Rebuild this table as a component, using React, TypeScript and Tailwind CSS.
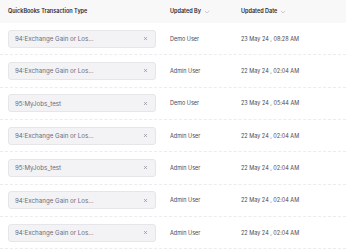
import React from "react";

const rows = [
  { t: "94:Exchange Gain or Los...", u: "Demo User", d: "23 May 24 , 08:28 AM" },
  { t: "94:Exchange Gain or Los...", u: "Admin User", d: "22 May 24 , 02:04 AM" },
  { t: "95:MyJobs_test", u: "Demo User", d: "23 May 24 , 05:44 AM" },
  { t: "94:Exchange Gain or Los...", u: "Admin User", d: "22 May 24 , 02:04 AM" },
  { t: "95:MyJobs_test", u: "Admin User", d: "22 May 24 , 02:04 AM" },
  { t: "94:Exchange Gain or Los...", u: "Admin User", d: "22 May 24 , 02:04 AM" },
  { t: "94:Exchange Gain or Los...", u: "Admin User", d: "22 May 24 , 02:04 AM" },
];

const Chevron = () => (
  <svg width="6" height="4" viewBox="0 0 6 4" className="ml-[3px]">
    <path d="M0.8 0.9 L3 3 L5.2 0.9" fill="none" stroke="#b8b8c0" strokeWidth="0.7" />
  </svg>
);

const X = () => (
  <svg width="5" height="5" viewBox="0 0 5 5">
    <path d="M1 1 L4 4 M4 1 L1 4" fill="none" stroke="#8e8e9a" strokeWidth="0.7" />
  </svg>
);

export default function App() {
  return (
    <div className="w-[346px] h-[250px] bg-white overflow-hidden" style={{ fontFamily: "Inter, 'Noto Sans', sans-serif" }}>
      <div className="flex items-center h-[23px] bg-[#f8f8f9] text-[5.5px] font-semibold text-[#2a2a35]">
        <div className="w-[170px] pl-[8px]">QuickBooks Transaction Type</div>
        <div className="w-[71px] flex items-center">Updated By<Chevron /></div>
        <div className="flex items-center">Updated Date<Chevron /></div>
      </div>
      {rows.map((r, i) => (
        <div key={i} className="flex items-center h-[32.33px] border-b border-dashed border-[#ececef] text-[5.5px]">
          <div className="w-[170px] pl-[8px]">
            <div className="w-[148px] h-[18px] rounded-[3px] bg-[#f3f3f5] border border-[#e6e6ea] flex items-center justify-between pl-[6px] pr-[7px] text-[6.2px] text-[#6a6a7a]">
              <span>{r.t}</span>
              <X />
            </div>
          </div>
          <div className="w-[71px] text-[#4a4a55]">{r.u}</div>
          <div className="text-[#4a4a55]">{r.d}</div>
        </div>
      ))}
    </div>
  );
}
